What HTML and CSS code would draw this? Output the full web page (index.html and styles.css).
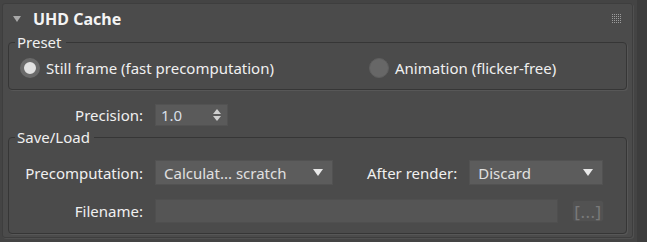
FILE: index.html
```html
<!DOCTYPE html>
<html lang="en">
<head>
    <meta charset="UTF-8">
    <title>UHD Cache</title>
    <link rel="stylesheet" href="styles.css">
</head>
<body>
    <div class="frame">
        <div class="panel">
            <div class="rollout-head">
                <span class="caret"></span>
                <span class="rollout-title">UHD Cache</span>
                <svg class="grip" width="10" height="10" viewBox="0 0 10 10">
                    <defs>
                        <pattern id="gripDots" width="2" height="2" patternUnits="userSpaceOnUse">
                            <rect width="1" height="1" fill="#9c9c9c"/>
                        </pattern>
                    </defs>
                    <rect width="9" height="9" fill="url(#gripDots)"/>
                </svg>
            </div>

            <fieldset class="group preset">
                <legend>Preset</legend>
                <div class="radios">
                    <label class="radio"><span class="dot on"></span>Still frame (fast precomputation)</label>
                    <label class="radio"><span class="dot"></span>Animation (flicker-free)</label>
                </div>
            </fieldset>

            <div class="row precision">
                <span class="lbl">Precision:</span>
                <div class="spinner">
                    <span>1.0</span>
                    <span class="arrows"><i class="up"></i><i class="down"></i></span>
                </div>
            </div>

            <fieldset class="group saveload">
                <legend>Save/Load</legend>
                <div class="row">
                    <span class="lbl">Precomputation:</span>
                    <div class="combo combo-pre"><span>Calculat... scratch</span><i class="arrow"></i></div>
                    <span class="lbl lbl-after">After render:</span>
                    <div class="combo combo-after"><span>Discard</span><i class="arrow"></i></div>
                </div>
                <div class="row">
                    <span class="lbl">Filename:</span>
                    <div class="field"></div>
                    <div class="browse">[...]</div>
                </div>
            </fieldset>
        </div>
        <div class="scroll"></div>
    </div>
</body>
</html>
```

FILE: styles.css
```css
html, body {
    margin: 0;
    padding: 0;
    background-color: #444444;
    font-family: "Noto Sans", "Open Sans", sans-serif;
    font-size: 15px;
    color: #e6e6e6;
}
.frame {
    display: flex;
    height: 242px;
}
.panel {
    width: 629px;
    height: 233px;
    margin: 3px 0 0 2px;
    padding: 0 5px;
    box-sizing: content-box;
    background-color: #4b4b4b;
    border: 1px solid #3e3e3e;
    border-radius: 3px;
    box-shadow: 1px 1px 0 #505050;
}
.scroll {
    margin-left: 4px;
    width: 10px;
    background-color: #3d3d3d;
}
.rollout-head {
    display: flex;
    align-items: center;
    height: 29px;
}
.caret {
    width: 0;
    height: 0;
    margin: 1px 0 0 5px;
    border-left: 4px solid transparent;
    border-right: 4px solid transparent;
    border-top: 6px solid #a8a8a8;
}
.rollout-title {
    margin-left: 12px;
    font-weight: bold;
    font-size: 16px;
    color: #f4f4f4;
}
.grip {
    margin: 0 5px 0 auto;
}
.group {
    margin: 0;
    padding: 0 6px;
    border: 1px solid #363636;
    border-radius: 4px;
    box-shadow: 1px 1px 0 #575757;
    min-width: 0;
}
.group legend {
    padding: 0 4px 0 2px;
    color: #f0f0f0;
    line-height: 19px;
}
.radios {
    display: grid;
    grid-template-columns: 349px 1fr;
    margin: 6px 0 11px 5px;
    color: #f0f0f0;
}
.radio {
    display: flex;
    align-items: center;
    gap: 6px;
    height: 20px;
}
.dot {
    width: 20px;
    height: 20px;
    border-radius: 50%;
    background-color: #676767;
    box-sizing: border-box;
    border: 1px solid #5e5e5e;
}
.dot.on {
    background-color: #e1e1e1;
    border: 4px solid #6a6a6a;
}
.row {
    display: flex;
    align-items: center;
}
.lbl {
    width: 135px;
    text-align: right;
    margin-right: 12px;
    color: #f0f0f0;
}
.precision {
    margin: 14px 0 2px;
}
.spinner {
    display: flex;
    align-items: center;
    justify-content: space-between;
    width: 73px;
    height: 22px;
    box-sizing: border-box;
    padding: 0 6px 0 5px;
    background-color: #5a5a5a;
    border: 1px solid #525252;
    color: #d7dfe8;
}
.arrows {
    display: flex;
    flex-direction: column;
    gap: 2px;
}
.arrows i {
    width: 0;
    height: 0;
    border-left: 4px solid transparent;
    border-right: 4px solid transparent;
}
.arrows .up { border-bottom: 5px solid #cfcfcf; }
.arrows .down { border-top: 5px solid #cfcfcf; }
.saveload {
    padding-bottom: 10px;
}
.saveload .row {
    margin-left: -7px;
}
.saveload .row:first-of-type {
    margin-top: 13px;
}
.saveload .row + .row {
    margin-top: 14px;
}
.combo {
    display: flex;
    align-items: center;
    justify-content: space-between;
    height: 25px;
    box-sizing: border-box;
    padding: 0 8px;
    background-color: #5c5c5c;
    border: 1px solid #525252;
    color: #e0e0e0;
}
.combo-pre { width: 178px; }
.combo-after { width: 134px; }
.lbl-after {
    width: auto;
    margin: 0 12px 0 34px;
}
.arrow {
    width: 0;
    height: 0;
    margin-right: 1px;
    border-left: 5px solid transparent;
    border-right: 5px solid transparent;
    border-top: 7px solid #e8e8e8;
}
.field {
    width: 403px;
    height: 24px;
    box-sizing: border-box;
    background-color: #555555;
    border: 1px solid #4f4f4f;
}
.browse {
    display: flex;
    align-items: center;
    justify-content: center;
    margin-left: 14px;
    width: 32px;
    height: 22px;
    box-sizing: border-box;
    font-size: 17px;
    letter-spacing: 0.5px;
    background-color: #525252;
    border: 1px solid #4c4c4c;
    border-radius: 3px;
    color: #7a7a7a;
}
```
